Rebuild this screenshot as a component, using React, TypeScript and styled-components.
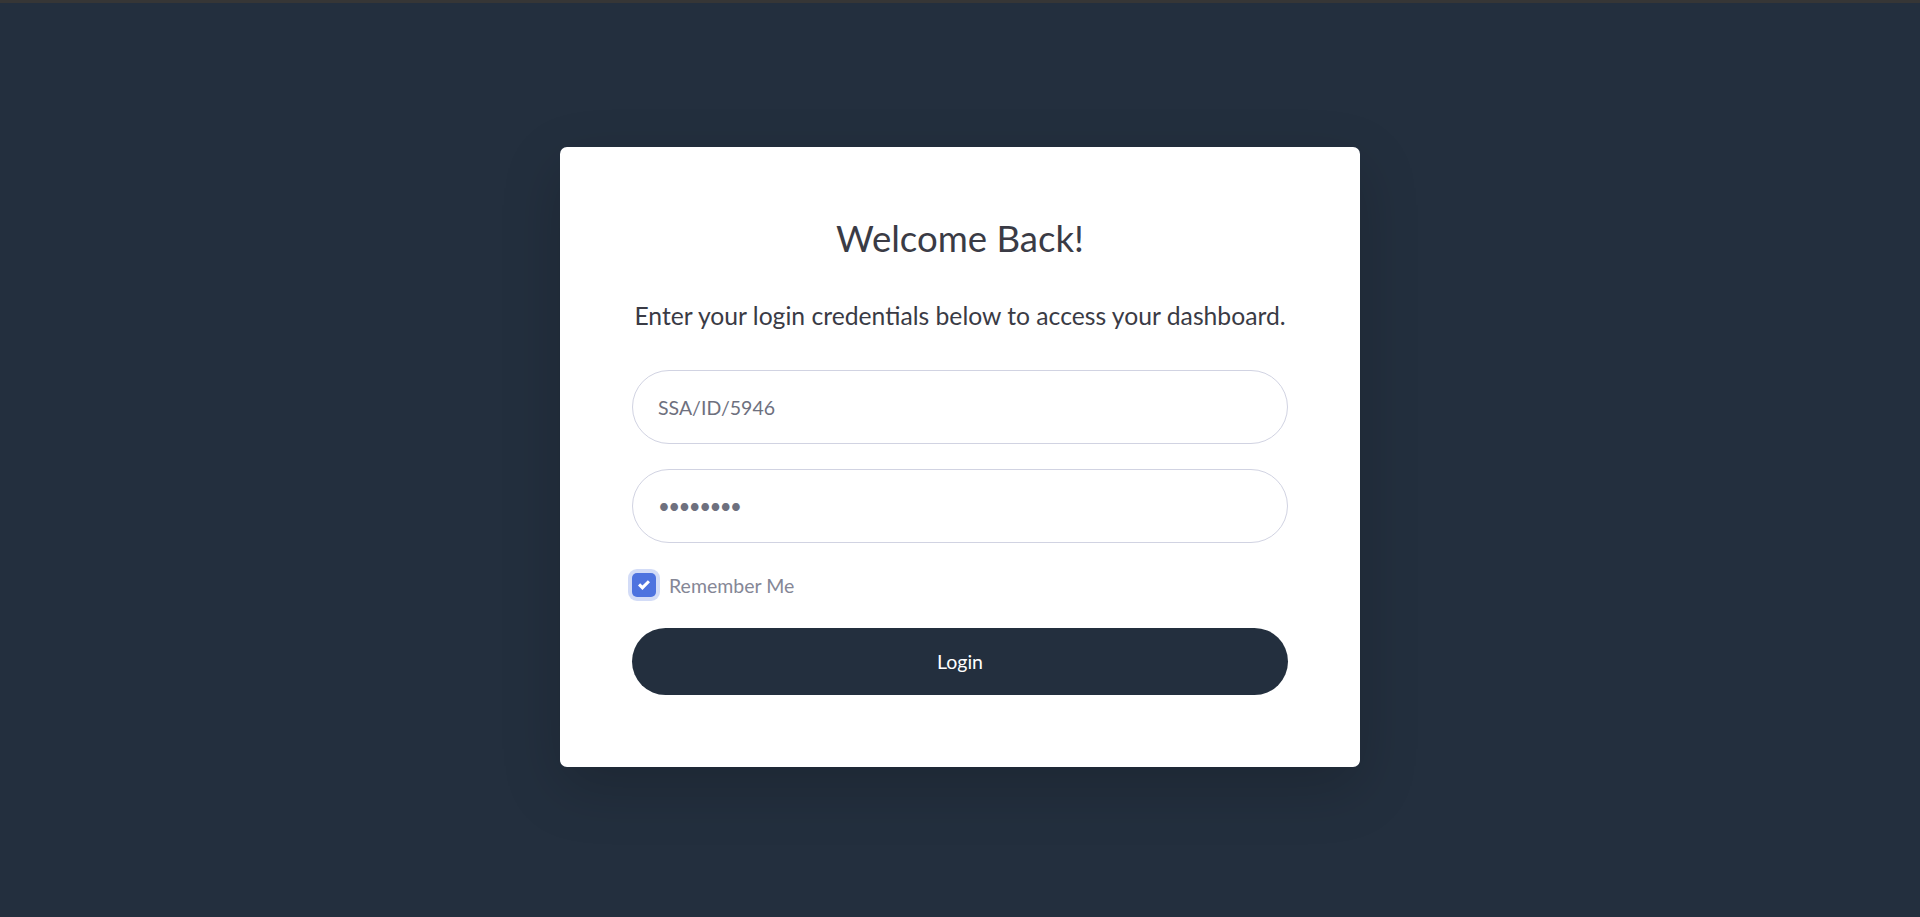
import React from "react";
import styled, { createGlobalStyle } from "styled-components";

const GlobalStyle = createGlobalStyle`
  html, body {
    margin: 0;
    padding: 0;
    background: #232f3e;
  }
  * { box-sizing: border-box; }
  body {
    font-family: "Lato", "Noto Sans", "Liberation Sans", sans-serif;
  }
`;

const Page = styled.div`
  min-height: 917px;
  background: #232f3e;
  border-top: 3px solid #363636;
  display: flex;
  flex-direction: column;
  align-items: center;
  padding-top: 144px;
`;

const Card = styled.div`
  width: 800px;
  background: #ffffff;
  border-radius: 7px;
  box-shadow: 0 20px 60px rgba(0, 0, 0, 0.175);
  padding: 70px 72px 72px;
  display: flex;
  flex-direction: column;
`;

const Title = styled.h1`
  margin: 0;
  font-size: 36.6px;
  line-height: 43px;
  font-weight: 400;
  color: #3a3b45;
  text-align: center;
`;

const Subtitle = styled.p`
  margin: 40px 0 0;
  font-size: 24.7px;
  line-height: 31px;
  font-weight: 400;
  color: #3a3b45;
  text-align: center;
`;

const Form = styled.form`
  margin-top: 39px;
  display: flex;
  flex-direction: column;
`;

const Field = styled.input<{ $dots?: boolean }>`
  height: 74px;
  width: 100%;
  border: 1px solid #d1d3e2;
  border-radius: 37px;
  padding: 0 25px;
  font-family: "Lato", "Noto Sans", sans-serif;
  font-size: ${(p) => (p.$dots ? "20.5px" : "19.5px")};
  color: #6e707e;
  background: #fff;
  outline: none;
  letter-spacing: ${(p) => (p.$dots ? "-1.6px" : "0")};
  & + & {
    margin-top: 25px;
  }
`;

const CheckRow = styled.label`
  margin-top: 25px;
  height: 34px;
  display: flex;
  align-items: center;
  gap: 13px;
  font-size: 19.5px;
  color: #858796;
`;

const CheckBox = styled.span`
  width: 24px;
  height: 24px;
  border-radius: 5px;
  background: #4e73df;
  box-shadow: 0 0 0 4px rgba(78, 115, 223, 0.25);
  display: flex;
  align-items: center;
  justify-content: center;
  flex-shrink: 0;
`;

const LoginButton = styled.button`
  margin-top: 26px;
  height: 67px;
  width: 100%;
  border: none;
  border-radius: 34px;
  background: #232f3e;
  color: #ffffff;
  font-family: "Lato", "Noto Sans", sans-serif;
  font-size: 19.5px;
  cursor: pointer;
`;

export default function App() {
  return (
    <>
      <GlobalStyle />
      <Page>
        <Card>
          <Title>Welcome Back!</Title>
          <Subtitle>Enter your login credentials below to access your dashboard.</Subtitle>
          <Form onSubmit={(e) => e.preventDefault()}>
            <Field type="text" defaultValue="SSA/ID/5946" />
            <Field type="password" defaultValue="12345678" $dots />
            <CheckRow>
              <CheckBox>
                <svg width="12" height="12" viewBox="0 0 8 8">
                  <path fill="#fff" d="M6.564.75l-3.59 3.612-1.538-1.55L0 4.26 2.974 7.25 8 2.193z" />
                </svg>
              </CheckBox>
              Remember Me
            </CheckRow>
            <LoginButton type="submit">Login</LoginButton>
          </Form>
        </Card>
      </Page>
    </>
  );
}
